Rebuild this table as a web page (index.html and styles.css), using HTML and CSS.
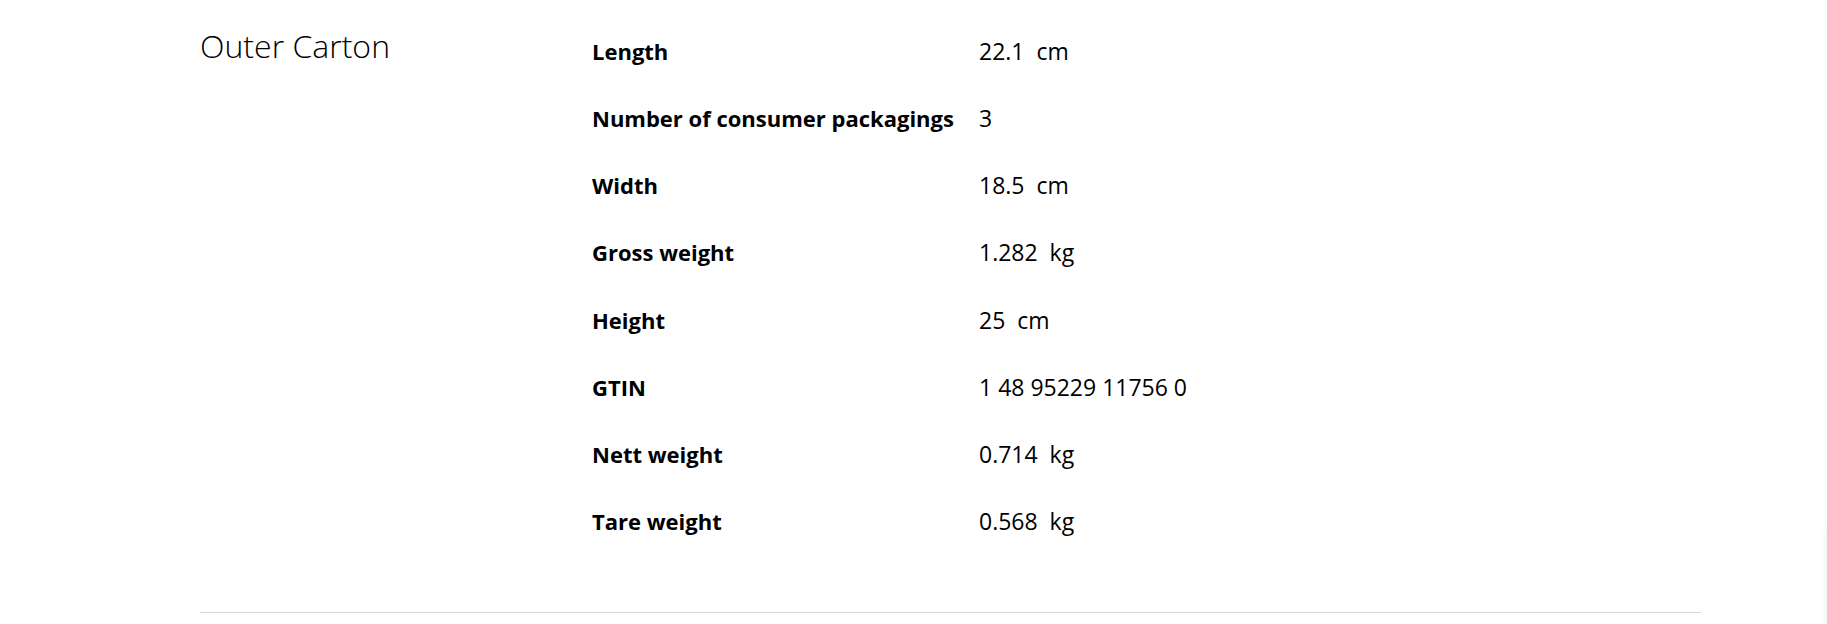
FILE: index.html
```html
<!DOCTYPE html>
<html lang="en">
<head>
<meta charset="utf-8">
<title>Outer Carton</title>
<link rel="stylesheet" href="styles.css">
</head>
<body>
<section class="spec">
  <h2 class="spec-title">Outer Carton</h2>
  <dl class="spec-list">
    <div class="spec-row"><dt>Length</dt><dd>22.1&nbsp; cm</dd></div>
    <div class="spec-row"><dt>Number of consumer packagings</dt><dd>3</dd></div>
    <div class="spec-row"><dt>Width</dt><dd>18.5&nbsp; cm</dd></div>
    <div class="spec-row"><dt>Gross weight</dt><dd>1.282&nbsp; kg</dd></div>
    <div class="spec-row"><dt>Height</dt><dd>25&nbsp; cm</dd></div>
    <div class="spec-row"><dt>GTIN</dt><dd>1 48 95229 11756 0</dd></div>
    <div class="spec-row"><dt>Nett weight</dt><dd>0.714&nbsp; kg</dd></div>
    <div class="spec-row"><dt>Tare weight</dt><dd>0.568&nbsp; kg</dd></div>
  </dl>
</section>
<div class="edge-panel"></div>
</body>
</html>
```
FILE: styles.css
```css
html, body {
  margin: 0;
  padding: 0;
  background: #fff;
  color: #000;
  font-family: "Open Sans", "Noto Sans", "Liberation Sans", sans-serif;
  overflow: hidden;
}

.spec {
  display: grid;
  grid-template-columns: 392px 1fr;
  width: 1501px;
  margin-left: 200px;
  padding-top: 17px;
  padding-bottom: 57px;
  border-bottom: 1px solid #d9d9d9;
}

.spec-title {
  margin: 0;
  font-size: 32px;
  font-weight: 300;
  line-height: 60px;
  margin-top: -1px;
}

.spec-list {
  margin: 0;
  display: grid;
  grid-auto-rows: 67.25px;
}

.spec-row {
  display: grid;
  grid-template-columns: 387px 1fr;
  align-items: center;
}

.spec-row dt {
  font-size: 22px;
  font-weight: 700;
}

.spec-row dd {
  margin: 0;
  font-size: 23px;
  font-weight: 400;
}

.edge-panel {
  position: fixed;
  top: 528px;
  left: 1827px;
  width: 200px;
  height: 200px;
  box-shadow: 0 0 6px rgba(0, 0, 0, 0.1);
}
```
